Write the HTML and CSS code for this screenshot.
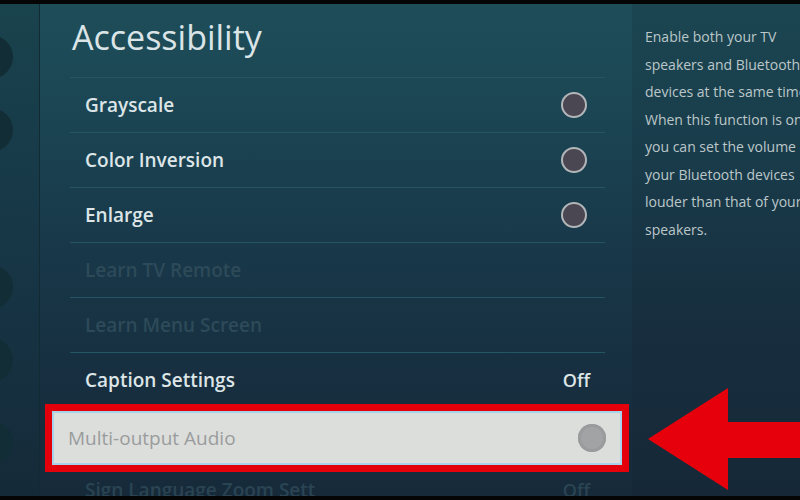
FILE: index.html
```html
<!DOCTYPE html>
<html lang="en">
<head>
<meta charset="utf-8">
<title>Accessibility</title>
<link rel="stylesheet" href="styles.css">
</head>
<body>
<div class="screen">
  <div class="edge"></div>
  <div class="stage">
    <aside class="rail">
      <span class="rail-dot d1"></span>
      <span class="rail-dot d2"></span>
      <span class="rail-dot d3"></span>
      <span class="rail-dot d4"></span>
      <span class="rail-dot d5"></span>
    </aside>
    <main class="panel">
      <h1 class="title">Accessibility</h1>
      <ul class="list">
        <li class="row"><span class="label">Grayscale</span><span class="toggle"></span></li>
        <li class="row"><span class="label">Color Inversion</span><span class="toggle"></span></li>
        <li class="row"><span class="label">Enlarge</span><span class="toggle"></span></li>
        <li class="row dim"><span class="label">Learn TV Remote</span></li>
        <li class="row dim"><span class="label">Learn Menu Screen</span></li>
        <li class="row"><span class="label">Caption Settings</span><span class="value">Off</span></li>
        <li class="row focused">
          <div class="focus-card">
            <span class="label">Multi-output Audio</span>
            <span class="toggle-grey"></span>
          </div>
        </li>
        <li class="row dim last"><span class="label">Sign Language Zoom Sett</span><span class="value">Off</span></li>
      </ul>
    </main>
    <section class="help">
      <p class="help-text">Enable both your TV<br>speakers and Bluetooth<br>devices at the same time.<br>When this function is on,<br>you can set the volume of<br>your Bluetooth devices<br>louder than that of your TV<br>speakers.</p>
      <svg class="arrow" width="168" height="492" viewBox="0 0 168 492" aria-hidden="true">
        <polygon points="16,435 96,384 96,418 168,418 168,454 96,454 96,486" fill="#e6000b"/>
      </svg>
    </section>
  </div>
  <div class="edge"></div>
</div>
</body>
</html>
```

FILE: styles.css
```css
html, body {
  margin: 0;
  padding: 0;
  background: #000;
}

body {
  width: 800px;
  height: 500px;
  overflow: hidden;
  font-family: "Open Sans", "Noto Sans", sans-serif;
}

.screen {
  display: flex;
  flex-direction: column;
  width: 800px;
  height: 500px;
}

.edge {
  height: 4px;
  background: #050505;
  flex: none;
}

.stage {
  display: flex;
  height: 492px;
  flex: none;
}

/* left rail with cut-off icons */
.rail {
  width: 39px;
  flex: none;
  display: flex;
  flex-direction: column;
  align-items: flex-start;
  background: linear-gradient(180deg, #19434d 0%, #173747 45%, #152a39 100%);
  border-right: 1px solid #122a33;
  overflow: hidden;
}

.rail-dot {
  display: block;
  width: 44px;
  height: 44px;
  border-radius: 50%;
  margin-left: -31px;
  background: #132d36;
  flex: none;
}
.d1 { margin-top: 31px; }
.d2 { margin-top: 29px; }
.d3 { margin-top: 113px; }
.d4 { margin-top: 29px; }
.d5 { margin-top: 39px; }

/* main settings panel */
.panel {
  width: 592px;
  flex: none;
  background: linear-gradient(180deg, #1e4e59 0%, #1b4453 25%, #183849 50%, #172f40 75%, #162a3a 100%);
  padding: 0 27px 0 30px;
  box-sizing: border-box;
}

.title {
  margin: 0;
  height: 73px;
  box-sizing: border-box;
  padding: 10px 0 0 2px;
  font-size: 34px;
  line-height: 47px;
  font-weight: 400;
  color: #dbe5e7;
}

.list {
  list-style: none;
  margin: 0;
  padding: 0;
}

.row {
  height: 55px;
  box-sizing: border-box;
  border-top: 1px solid #255464;
  display: flex;
  align-items: center;
  justify-content: space-between;
  padding: 0 18px 0 15px;
}

.label {
  font-size: 19px;
  font-weight: 600;
  color: #dde5e7;
  white-space: nowrap;
}

.value {
  font-size: 18px;
  font-weight: 600;
  color: #dde5e7;
  margin-right: -3px;
}

.dim .label,
.dim .value {
  color: #2d4a59;
}

.last .label,
.last .value {
  color: #2a4453;
}

.toggle {
  width: 26px;
  height: 26px;
  box-sizing: border-box;
  border-radius: 50%;
  border: 2.5px solid #b3b6b8;
  background: #4a4752;
}

/* focused item with red annotation frame */
.focused {
  position: relative;
  border-top-color: transparent;
}

.focus-card {
  position: absolute;
  left: -25px;
  right: -24px;
  top: -4px;
  bottom: -10px;
  border: 7px solid #e3000b;
  box-sizing: border-box;
  background: #dcdedc;
  box-shadow: inset 0 0 0 2px #a6d2ea;
  display: flex;
  align-items: center;
  justify-content: space-between;
  padding: 0 16px 0 16px;
}

.focus-card .label {
  color: #9a9c9c;
  font-weight: 500;
}

.toggle-grey {
  width: 28px;
  height: 28px;
  border-radius: 50%;
  background: #a2a3a4;
  box-shadow: inset 0 0 0 3px #9a9b9c;
}

/* right help panel */
.help {
  position: relative;
  flex: 1;
  background: linear-gradient(180deg, #1b4651 0%, #193c4b 30%, #172e3e 65%, #162838 100%);
  overflow: hidden;
}

.help-text {
  margin: 0;
  padding: 19px 0 0 13px;
  font-size: 14px;
  line-height: 27.5px;
  color: #bcc7c9;
  white-space: nowrap;
}

.arrow {
  position: absolute;
  left: 0;
  top: 0;
}
```
